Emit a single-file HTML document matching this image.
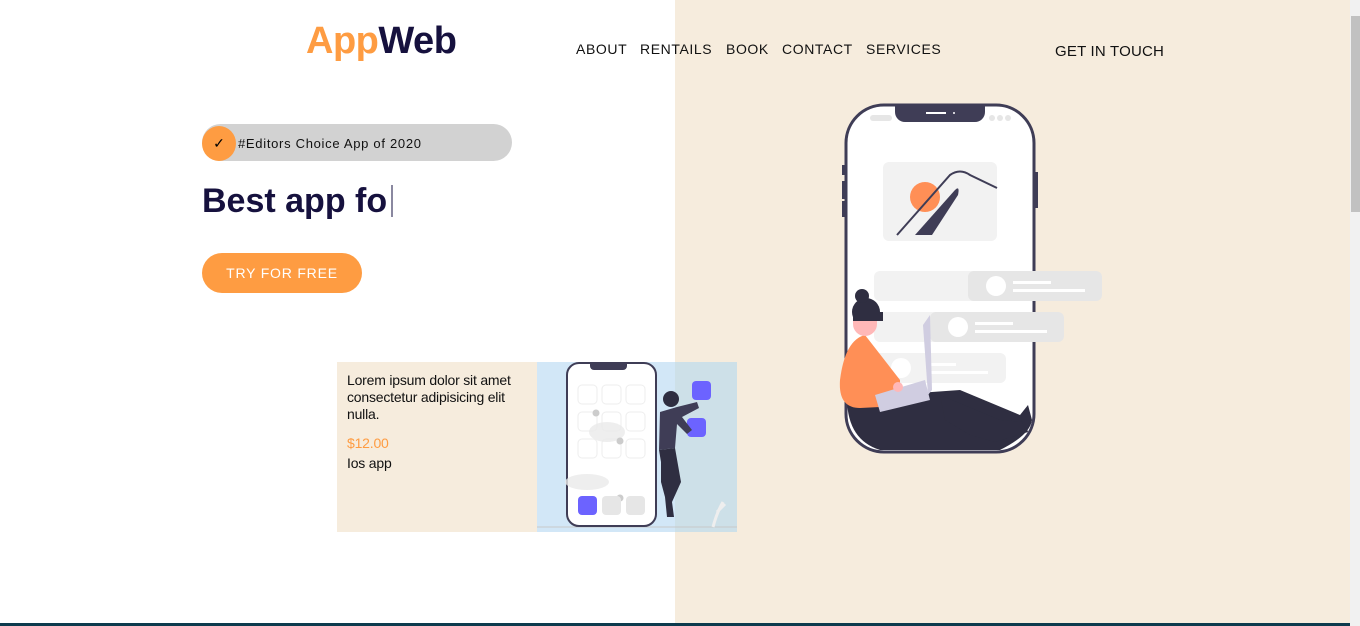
<!DOCTYPE html>
<html><head><meta charset="utf-8"><style>
*{margin:0;padding:0;box-sizing:border-box}
body{width:1360px;height:626px;overflow:hidden;background:#fff;font-family:"Liberation Sans",Arial,sans-serif;position:relative}
.beige{position:absolute;left:675px;top:0;width:675px;height:626px;background:#f6ecdd}
.abs{position:absolute}
.logo{left:306px;top:20px;font-size:38px;font-weight:bold;color:#16113e;letter-spacing:-0.5px}
.logo span{color:#fe9c42}
.nav{top:41px;font-size:14px;letter-spacing:0.6px;color:#111}
.badge{left:202px;top:124px;width:310px;height:37px;background:#d2d2d2;border-radius:19px}
.chk{left:202px;top:126px;width:34px;height:35px;border-radius:50%;background:#fe9c42;text-align:center;line-height:35px;font-size:14px;color:#000}
.badgetxt{left:238px;top:136px;font-size:13px;letter-spacing:0.7px;color:#111}
h1{position:absolute;left:202px;top:182px;font-size:34px;color:#16113e;font-weight:bold;letter-spacing:0}
.cur{display:inline-block;width:2px;height:32px;background:#8a88a0;vertical-align:-5px;margin-left:4px}
.btn{left:202px;top:253px;width:160px;height:40px;border-radius:20px;background:#fe9c42;color:#fff;font-size:14px;letter-spacing:0.8px;text-align:center;line-height:40px}
.card{left:337px;top:362px;width:200px;height:170px;background:#f6ecdd;padding:10px}
.card p{font-size:14px;line-height:17px;color:#111;letter-spacing:-0.2px}
.scroll{left:1350px;top:0;width:10px;height:626px;background:#f1f1f1}
.thumb{left:1351px;top:16px;width:9px;height:196px;background:#c1c1c1}
.bottom{left:0;top:623px;width:1350px;height:3px;background:#0c3a4d}
</style></head><body>
<div class="beige"></div>
<div class="abs logo"><span>App</span>Web</div>
<div class="abs nav" style="left:576px">ABOUT</div>
<div class="abs nav" style="left:640px">RENTAILS</div>
<div class="abs nav" style="left:726px">BOOK</div>
<div class="abs nav" style="left:782px">CONTACT</div>
<div class="abs nav" style="left:866px">SERVICES</div>
<div class="abs nav" style="left:1055px;top:43px;font-size:15px;letter-spacing:0.2px">GET IN TOUCH</div>
<div class="abs badge"></div>
<div class="abs chk">✓</div>
<div class="abs badgetxt">#Editors Choice App of 2020</div>
<h1>Best app fo<span class="cur"></span></h1>
<div class="abs btn">TRY FOR FREE</div>

<svg class="abs" style="left:820px;top:90px" width="300" height="370" viewBox="0 0 300 370">
<rect x="22" y="75" width="4" height="10" fill="#3f3d56"/><rect x="22" y="91" width="4" height="18" fill="#3f3d56"/><rect x="22" y="111" width="4" height="16" fill="#3f3d56"/>
<rect x="214" y="82" width="4" height="36" fill="#3f3d56"/>
<rect x="26" y="15" width="188" height="347" rx="38" fill="#fff" stroke="#3f3d56" stroke-width="3"/>
<path d="M75 15 H165 V22 a10 10 0 0 1 -10 10 H85 a10 10 0 0 1 -10 -10Z" fill="#3f3d56"/>
<rect x="106" y="22" width="20" height="2" fill="#fff"/><circle cx="134" cy="23" r="1" fill="#fff"/>
<rect x="50" y="25" width="22" height="6" rx="3" fill="#e6e6e6"/>
<circle cx="172" cy="28" r="3" fill="#e6e6e6"/><circle cx="180" cy="28" r="3" fill="#e6e6e6"/><circle cx="188" cy="28" r="3" fill="#e6e6e6"/>
<rect x="63" y="72" width="114" height="79" rx="6" fill="#f2f2f2"/>
<circle cx="105" cy="107" r="15" fill="#ff8f56"/>
<path d="M77 145 L130 85 Q140 78 150 85 L177 98" fill="none" stroke="#3f3d56" stroke-width="2"/>
<path d="M95 145 L135 100 Q140 95 138 105 L112 145Z" fill="#3f3d56"/>
<rect x="54" y="181" width="130" height="30" rx="6" fill="#f2f2f2"/>
<rect x="148" y="181" width="134" height="30" rx="6" fill="#e6e6e6"/>
<circle cx="176" cy="196" r="10" fill="#fff"/><rect x="193" y="191" width="38" height="3" fill="#fff"/><rect x="193" y="199" width="72" height="3" fill="#fff"/>
<rect x="54" y="222" width="130" height="30" rx="6" fill="#f2f2f2"/>
<rect x="110" y="222" width="134" height="30" rx="6" fill="#e6e6e6"/>
<circle cx="138" cy="237" r="10" fill="#fff"/><rect x="155" y="232" width="38" height="3" fill="#fff"/><rect x="155" y="240" width="72" height="3" fill="#fff"/>
<rect x="54" y="263" width="132" height="30" rx="6" fill="#f2f2f2"/>
<circle cx="81" cy="278" r="10" fill="#fff"/>
<rect x="108" y="273" width="28" height="3" fill="#fff"/><rect x="108" y="281" width="60" height="3" fill="#fff"/>
<path d="M27 310 Q28 350 60 360 H180 Q210 345 212 330 L140 300 L70 305Z" fill="#2f2e41"/>
<path d="M120 305 L180 330 L205 332 L208 342 L175 352 L150 345 L125 330Z" fill="#2f2e41"/>
<path d="M200 325 L208 315 L212 330 L205 340Z" fill="#2f2e41"/>
<path d="M45 245 Q25 250 20 290 Q18 318 40 318 L80 316 L80 290 Z" fill="#ff8f56"/>
<path d="M55 305 L105 290 L110 310 L60 322Z" fill="#d0cde1"/>
<path d="M103 235 L110 225 L112 300 L108 305Z" fill="#d0cde1"/>
<circle cx="46" cy="222" r="14" fill="#2f2e41"/><circle cx="42" cy="206" r="7" fill="#2f2e41"/>
<path d="M33 222 h24 v12 a12 12 0 0 1 -24 0Z" fill="#ffb8b8"/>
<rect x="33" y="222" width="30" height="9" fill="#2f2e41"/>
<circle cx="78" cy="297" r="5" fill="#ffb8b8"/>
</svg>

<div class="abs card"><p>Lorem ipsum dolor sit amet consectetur adipisicing elit nulla.</p>
<p style="color:#fe9c42;margin-top:12px;font-size:14px">$12.00</p>
<p style="margin-top:3px">Ios app</p></div>
<svg class="abs" style="left:537px;top:362px" width="200" height="170" viewBox="0 0 200 170">
<rect width="200" height="170" fill="#d2e7f7"/>
<rect x="138" y="0" width="62" height="170" fill="#cde0e8"/>
<line x1="0" y1="165" x2="200" y2="165" stroke="#c8c8c8"/>
<rect x="30" y="1" width="89" height="163" rx="12" fill="#fff" stroke="#3f3d56" stroke-width="2"/>
<path d="M53 1 H90 v3 a4 4 0 0 1 -4 4 H57 a4 4 0 0 1 -4 -4Z" fill="#3f3d56"/>
<g fill="none" stroke="#eee">
<rect x="41" y="23" width="19" height="19" rx="4"/><rect x="65" y="23" width="19" height="19" rx="4"/><rect x="89" y="23" width="19" height="19" rx="4"/>
<rect x="41" y="50" width="19" height="19" rx="4"/><rect x="65" y="50" width="19" height="19" rx="4"/><rect x="89" y="50" width="19" height="19" rx="4"/>
<rect x="41" y="77" width="19" height="19" rx="4"/><rect x="65" y="77" width="19" height="19" rx="4"/><rect x="89" y="77" width="19" height="19" rx="4"/></g>
<ellipse cx="70" cy="70" rx="18" ry="10" fill="#eaeaea" opacity=".8"/>
<ellipse cx="50" cy="120" rx="22" ry="8" fill="#eaeaea" opacity=".8"/>
<circle cx="59" cy="51" r="3.5" fill="#ccc"/><circle cx="83" cy="79" r="3.5" fill="#ccc"/><circle cx="83" cy="136" r="3.5" fill="#ccc"/>
<rect x="41" y="134" width="19" height="19" rx="4" fill="#6c63ff"/><rect x="65" y="134" width="19" height="19" rx="4" fill="#e6e6e6"/><rect x="89" y="134" width="19" height="19" rx="4" fill="#e6e6e6"/>
<rect x="155" y="19" width="19" height="19" rx="4" fill="#6c63ff"/><rect x="150" y="56" width="19" height="19" rx="4" fill="#6c63ff"/>
<circle cx="134" cy="37" r="8" fill="#2f2e41"/>
<path d="M123 50 L140 45 L160 40 L162 46 L145 55 L155 68 L150 72 L140 62 L138 86 L122 88Z" fill="#3f3d56"/>
<path d="M122 88 L138 86 L144 120 L135 140 L137 155 L130 155 L128 135 L124 120 L124 100Z" fill="#2f2e41"/>
<path d="M186 140 Q180 150 176 165 M180 150 L188 142" stroke="#eee" stroke-width="3" fill="none"/>
</svg>

<div class="abs scroll"></div><div class="abs thumb"></div>
<div class="abs bottom"></div>
</body></html>
